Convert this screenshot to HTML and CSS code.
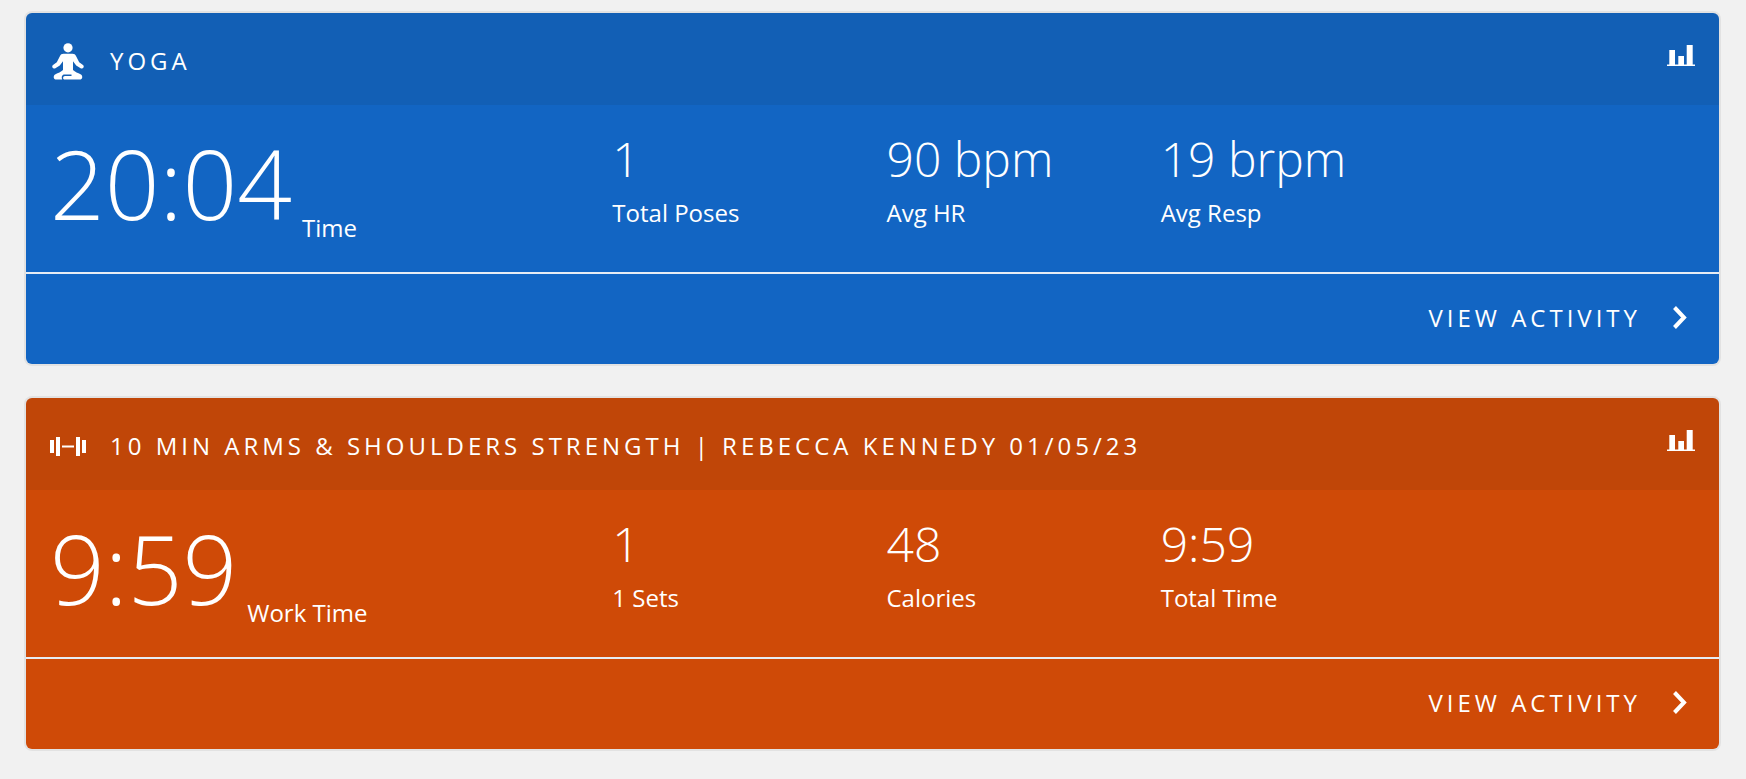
FILE: index.html
```html
<!DOCTYPE html>
<html lang="en">
<head>
    <meta charset="UTF-8">
    <meta name="viewport" content="width=device-width, initial-scale=1.0">
    <title>Activities</title>
    <link rel="stylesheet" href="styles.css">
</head>
<body>

    <main class="feed">
        <article class="card card-yoga">
            <header class="card-header">
                <svg class="sport-icon" viewBox="0 0 36 38" aria-hidden="true">
                    <circle cx="18" cy="5.8" r="4.6"/>
                    <path d="M13.5 11.8H22.5C24.3 11.8 25.3 12.6 26 14L29.2 20.2L33 23C34.6 24.4 33.4 27 31 26.4L26.2 23.4L23 19.3V28C25 30 28 31 30.5 32.2C33 33.4 33 37.6 29.5 37.6H14.8C12.4 37.6 12.6 34 15 34H21.5V32.6H14.5C12 32.6 11.2 35.2 12.2 37.6H6.5C3 37.6 3 33.4 5.5 32.2C8 31 11 30 13 28V19.3L9.8 23.4L5 26.4C2.6 27 1.4 24.4 3 23L6.8 20.2L10 14C10.7 12.6 11.7 11.8 13.5 11.8Z"/>
                </svg>
                <h2 class="card-title">Yoga</h2>
                <svg class="chart-icon" viewBox="0 0 30 22" aria-hidden="true">
                    <path d="M3.3 5H9V19.4H12.3V11H18V19.4H20.7V0H26.7V19.4H29V21H1V19.4H3.3Z"/>
                </svg>
            </header>
            <div class="card-body">
                <div class="main-stat">
                    <span class="main-value">20:04</span>
                    <span class="label">Time</span>
                </div>
                <div class="stat">
                    <span class="value">1</span>
                    <span class="label">Total Poses</span>
                </div>
                <div class="stat">
                    <span class="value">90 bpm</span>
                    <span class="label">Avg HR</span>
                </div>
                <div class="stat">
                    <span class="value">19 brpm</span>
                    <span class="label">Avg Resp</span>
                </div>
            </div>
            <footer class="card-footer">
                <a class="view-link" href="#">View Activity
                    <svg class="chevron" viewBox="0 0 14 24" aria-hidden="true"><path d="M1.5 1.5L11 11.5L1.5 21.5"/></svg>
                </a>
            </footer>
        </article>

        <article class="card card-strength">
            <header class="card-header">
                <svg class="sport-icon" viewBox="0 0 36 38" aria-hidden="true">
                    <path d="M0 13H4V26H0ZM6 10H10V29H6ZM12 18.4H24V20.4H12ZM26 10H30V29H26ZM32 13H36V26H32Z"/>
                </svg>
                <h2 class="card-title">10 Min Arms &amp; Shoulders Strength | Rebecca Kennedy 01/05/23</h2>
                <svg class="chart-icon" viewBox="0 0 30 22" aria-hidden="true">
                    <path d="M3.3 5H9V19.4H12.3V11H18V19.4H20.7V0H26.7V19.4H29V21H1V19.4H3.3Z"/>
                </svg>
            </header>
            <div class="card-body">
                <div class="main-stat">
                    <span class="main-value">9:59</span>
                    <span class="label">Work Time</span>
                </div>
                <div class="stat">
                    <span class="value">1</span>
                    <span class="label">1 Sets</span>
                </div>
                <div class="stat">
                    <span class="value">48</span>
                    <span class="label">Calories</span>
                </div>
                <div class="stat">
                    <span class="value">9:59</span>
                    <span class="label">Total Time</span>
                </div>
            </div>
            <footer class="card-footer">
                <a class="view-link" href="#">View Activity
                    <svg class="chevron" viewBox="0 0 14 24" aria-hidden="true"><path d="M1.5 1.5L11 11.5L1.5 21.5"/></svg>
                </a>
            </footer>
        </article>
    </main>

</body>
</html>
```
FILE: styles.css
```css
* {
    box-sizing: border-box;
}

body {
    margin: 0;
    background-color: #f1f1f1;
    color: #fff;
    font-family: "Open Sans", "Noto Sans", sans-serif;
    font-size: 24px;
    line-height: 32px;
}

.feed {
    display: flex;
    flex-direction: column;
    gap: 34px;
    padding: 13px 27px 30px 26px;
}

/* Activity card */
.card {
    border-radius: 6px;
    overflow: hidden;
    box-shadow: 0 0 0 2px rgba(0, 0, 0, 0.06);
}

.card-yoga {
    background-color: #1265c3;
}

.card-strength {
    background-color: #cf4a07;
}

/* Title bar */
.card-header {
    display: flex;
    align-items: center;
    height: 92px;
    padding: 4px 23px 0 24px;
    background-color: rgba(24, 24, 24, 0.08);
}

.sport-icon {
    flex: none;
    width: 36px;
    height: 38px;
    fill: currentColor;
}

.card-title {
    flex: 1;
    margin: 0 0 0 24px;
    font-size: 24px;
    font-weight: 400;
    letter-spacing: 4px;
    text-transform: uppercase;
}

.chart-icon {
    width: 30px;
    height: 22px;
    margin-bottom: 10px;
    fill: currentColor;
}

/* Numbers */
.card-body {
    display: grid;
    grid-template-columns: 2fr repeat(4, 1fr);
    padding: 16px 24px 28px;
}

.main-stat {
    display: flex;
    align-items: flex-end;
    gap: 10px;
}

.main-value {
    font-size: 96px;
    font-weight: 300;
    line-height: 123px;
}

.stat {
    display: flex;
    flex-direction: column;
    gap: 8px;
    padding: 8px 0 0 14px;
}

.value {
    font-size: 48px;
    font-weight: 300;
    line-height: 60px;
}

.label {
    font-size: 24px;
    white-space: nowrap;
}

/* Link row */
.card-footer {
    display: flex;
    justify-content: flex-end;
    border-top: 2px solid #e6ecf4;
    padding: 28px 32px 30px;
}

.view-link {
    display: flex;
    align-items: center;
    gap: 32px;
    color: inherit;
    letter-spacing: 4px;
    text-decoration: none;
    text-transform: uppercase;
}

.chevron {
    width: 14px;
    height: 24px;
    fill: none;
    stroke: currentColor;
    stroke-width: 4;
}
```
